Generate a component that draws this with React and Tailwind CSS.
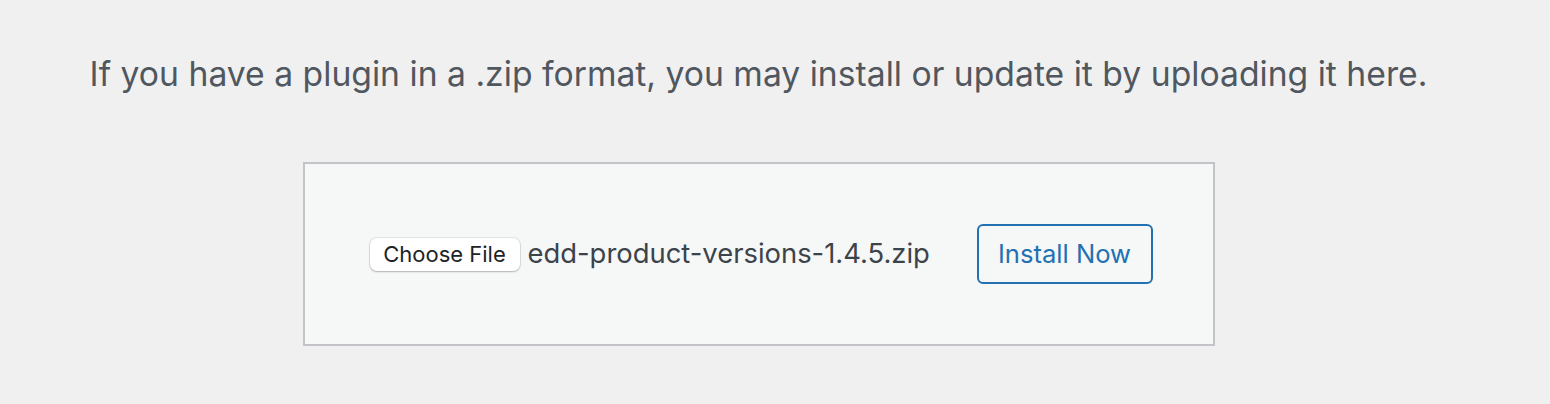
import React from "react";

const font = { fontFamily: "Inter, 'Liberation Sans', sans-serif" };

export default function App() {
  return (
    <div
      className="w-full min-h-[404px] bg-[#f0f0f1] flex flex-col items-center pt-[52px] pr-[33px]"
      style={font}
    >
      <p className="text-[33.7px] leading-[44px] text-[#50575e] text-center whitespace-nowrap">
        If you have a plugin in a .zip format, you may install or update it by uploading it here.
      </p>

      <form className="mt-[66px] w-[912px] h-[184px] bg-[#f6f7f7] border-2 border-[#c3c4c7] px-[60px] flex items-center">
        <div className="flex items-center">
          <button
            type="button"
            className="ml-[5px] h-[33px] w-[150px] bg-white rounded-[7px] shadow-[0_0_0_1px_rgba(0,0,0,0.07),0_1px_2px_rgba(0,0,0,0.22)] text-[22px] leading-none text-[#1d2327]"
          >
            Choose File
          </button>
          <span className="ml-[8px] text-[27.4px] leading-none text-[#3c434a] whitespace-nowrap">
            edd-product-versions-1.4.5.zip
          </span>
        </div>
        <button
          type="button"
          className="ml-auto h-[60px] w-[176px] border-2 border-[#2271b1] rounded-[6px] bg-[#f6f7f7] text-[25.6px] leading-none text-[#2271b1]"
        >
          Install Now
        </button>
      </form>
    </div>
  );
}
